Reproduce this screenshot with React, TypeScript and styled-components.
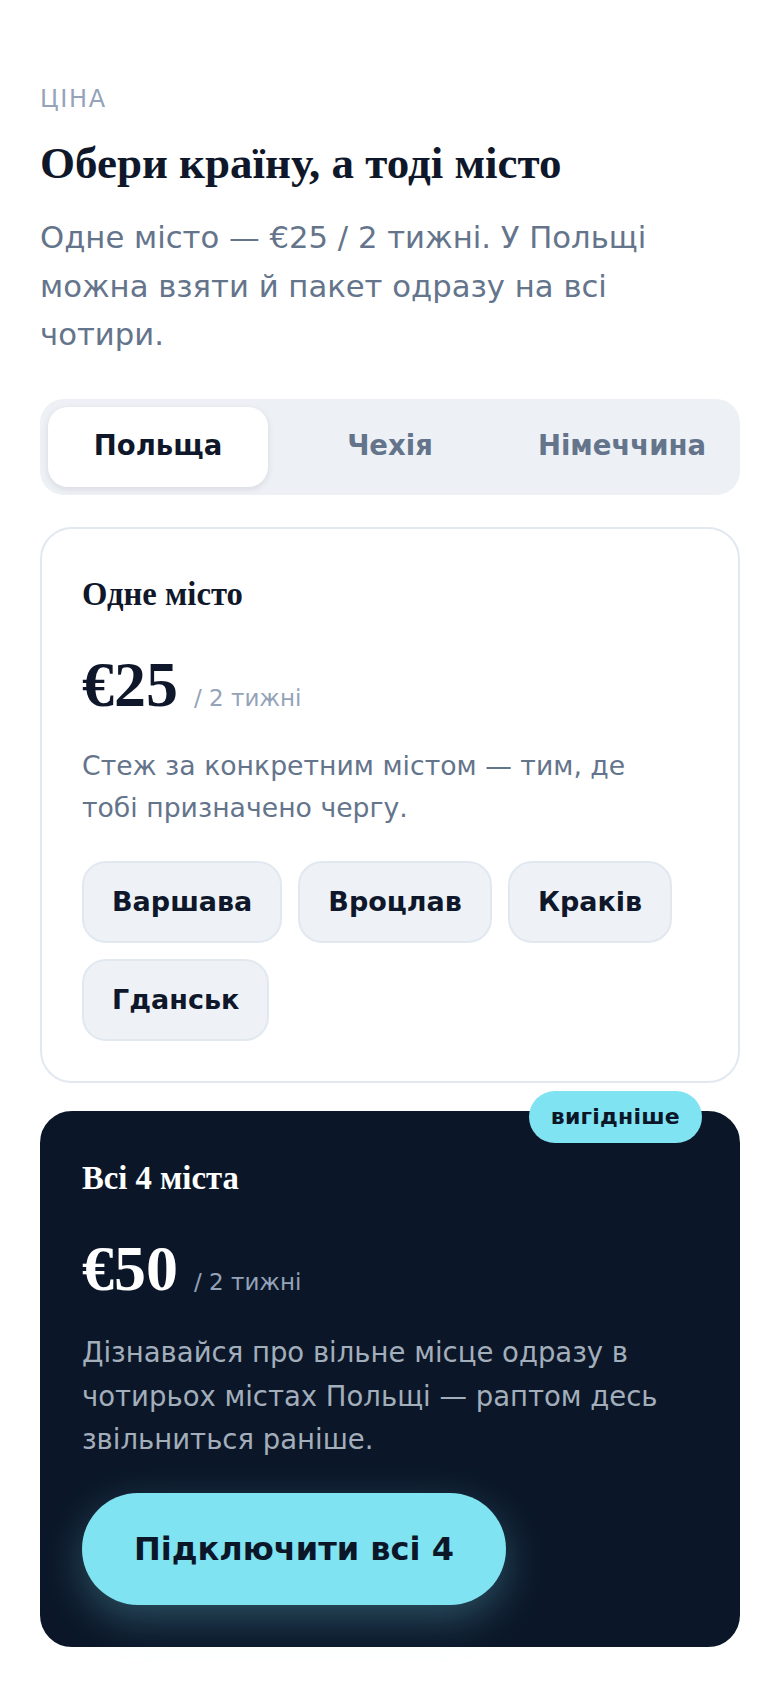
import React, { FunctionComponent, useState } from 'react'
import styled, { createGlobalStyle } from 'styled-components'

const GlobalStyle = createGlobalStyle`
	body
	{
		margin: 0;
		background: #ffffff;
		font-family: "DejaVu Sans", "Noto Sans", sans-serif;
		line-height: 1.6;
		color: #0f172a;
	}
`


const Page = styled.main`
	padding: 80px 40px 38px;
`


const Eyebrow = styled.div`
	font-size: 24px;
	letter-spacing: .07em;
	color: #94a3b8;
	text-transform: uppercase;
`


const Heading = styled.h1`
	margin: 18px 0 0;
	font-family: "Liberation Serif", "Times New Roman", serif;
	font-size: 45px;
	font-weight: 700;
	line-height: 1.2;
	color: #0f172a;
`


const Lead = styled.p`
	max-width: 660px;
	margin: 24px 0 0;
	font-size: 30.7px;
	line-height: 1.57;
	color: #64748b;
`


const TabBar = styled.div`
	display: grid;
	grid-template-columns: repeat(3, 1fr);
	gap: 12px;
	margin-top: 40px;
	padding: 8px;
	border-radius: 24px;
	background: #edf1f5;
`


const Tab = styled.button<{ $active: boolean }>`
	height: 80px;
	padding: 0 0 4px;
	border: 0;
	border-radius: 20px;
	font-family: inherit;
	font-size: 27.5px;
	font-weight: 700;
	cursor: pointer;
	background: ${p => p.$active ? '#ffffff' : 'transparent'};
	color: ${p => p.$active ? '#0f172a' : '#64748b'};
	box-shadow: ${p => p.$active ? '0 2px 6px rgba(15, 23, 42, .10)' : 'none'};
`


const Plans = styled.div`
	display: flex;
	flex-direction: column;
	gap: 28px;
	margin-top: 32px;
`


const PlanCard = styled.section<{ $dark?: boolean }>`
	position: relative;
	padding: 40px;
	border-radius: 32px;
	border: 2px solid ${p => p.$dark ? '#0b1729' : '#e2e8f0'};
	background: ${p => p.$dark ? '#0b1729' : '#ffffff'};
	color: ${p => p.$dark ? '#ffffff' : '#0f172a'};
`


const Badge = styled.span`
	position: absolute;
	top: -22px;
	right: 36px;
	padding: 8px 22px;
	border-radius: 999px;
	background: #7fe3f1;
	color: #0b1729;
	font-size: 22px;
	font-weight: 700;
	letter-spacing: .01em;
`


const PlanTitle = styled.h2`
	margin: 0;
	font-family: "Liberation Serif", "Times New Roman", serif;
	font-size: 32.7px;
	font-weight: 700;
	line-height: 1.56;
`


const PriceRow = styled.div`
	display: flex;
	align-items: baseline;
	gap: 16px;
	margin-top: 33px;
	line-height: 1;
`


const Price = styled.span`
	font-family: "Liberation Serif", "Times New Roman", serif;
	font-size: 64px;
	font-weight: 700;
`


const Period = styled.span`
	font-size: 23px;
	color: #94a3b8;
`


const PlanText = styled.p<{ $dark?: boolean }>`
	max-width: 580px;
	margin: ${p => p.$dark ? '30px' : '28px'} 0 0;
	font-size: ${p => p.$dark ? '27.5px' : '26.7px'};
	line-height: 1.58;
	color: ${p => p.$dark ? '#a3aebb' : '#64748b'};
`


const Chips = styled.div`
	display: flex;
	flex-wrap: wrap;
	gap: 16px;
	margin-top: 32px;
`


const Chip = styled.button`
	height: 82px;
	padding: 0 28px 2px;
	border: 2px solid #e2e8f0;
	border-radius: 24px;
	background: #eef2f6;
	color: #0f172a;
	font-family: inherit;
	font-size: 27px;
	font-weight: 700;
	cursor: pointer;
`


const Cta = styled.button`
	margin-top: 31px;
	padding: 32px 52px;
	border: 0;
	border-radius: 999px;
	background: #7fe3f1;
	color: #0b1729;
	font-family: inherit;
	font-size: 32px;
	font-weight: 700;
	line-height: 1.5;
	cursor: pointer;
	box-shadow: 0 14px 40px rgba(127, 227, 241, .28);
`


type Country = {
	name: string
	, locative: string
	, cities: string[]
}

const countries: Country[] = [
	{ name: 'Польща', locative: 'Польщі', cities: ['Варшава', 'Вроцлав', 'Краків', 'Гданськ'] }
	, { name: 'Чехія', locative: 'Чехії', cities: ['Прага', 'Брно', 'Острава'] }
	, { name: 'Німеччина', locative: 'Німеччині', cities: ['Берлін', 'Мюнхен', 'Гамбург'] }
]


const App: FunctionComponent = () => {
	const [active, setActive] = useState(0)
	const country = countries[active]
	const count = country.cities.length

	return (
		<Page>
			<GlobalStyle />
			<Eyebrow>Ціна</Eyebrow>
			<Heading>Обери країну, а тоді місто</Heading>
			<Lead>
				Одне місто — €25 / 2 тижні. У Польщі можна взяти й пакет одразу на всі чотири.
			</Lead>

			<TabBar>
				{countries.map((c, i) => (
					<Tab key={c.name} $active={i === active} onClick={() => setActive(i)}>
						{c.name}
					</Tab>
				))}
			</TabBar>

			<Plans>
				<PlanCard>
					<PlanTitle>Одне місто</PlanTitle>
					<PriceRow>
						<Price>€25</Price>
						<Period>/ 2 тижні</Period>
					</PriceRow>
					<PlanText>Стеж за конкретним містом — тим, де тобі призначено чергу.</PlanText>
					<Chips>
						{country.cities.map(city => <Chip key={city}>{city}</Chip>)}
					</Chips>
				</PlanCard>

				<PlanCard $dark>
					<Badge>вигідніше</Badge>
					<PlanTitle>{`Всі ${count} міста`}</PlanTitle>
					<PriceRow>
						<Price>€50</Price>
						<Period>/ 2 тижні</Period>
					</PriceRow>
					<PlanText $dark>
						{`Дізнавайся про вільне місце одразу в чотирьох містах ${country.locative} — раптом десь звільниться раніше.`}
					</PlanText>
					<Cta>{`Підключити всі ${count}`}</Cta>
				</PlanCard>
			</Plans>
		</Page>
	)
}


export default App
